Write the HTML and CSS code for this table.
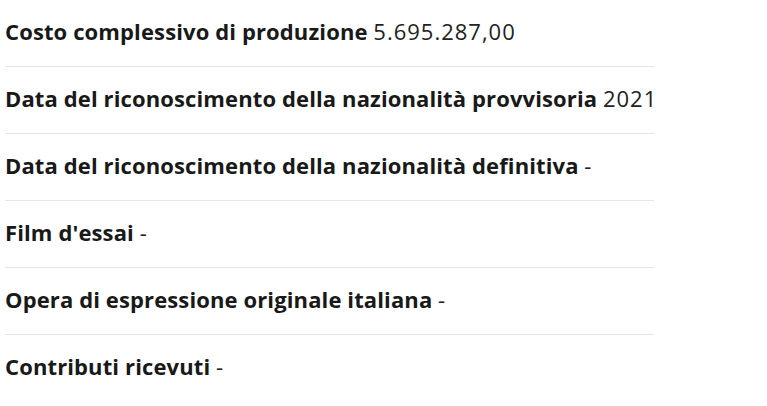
FILE: index.html
```html
<!DOCTYPE html>
<html lang="it">
<head>
    <meta charset="UTF-8">
    <title>Dettagli opera</title>
    <link rel="stylesheet" href="styles.css">
</head>
<body>
    <ul class="info-list">
        <li><strong>Costo complessivo di produzione</strong> <span class="val">5.695.287,00</span></li>
        <li><strong>Data del riconoscimento della nazionalità provvisoria</strong> <span class="val">2021</span></li>
        <li><strong>Data del riconoscimento della nazionalità definitiva</strong> <span class="val">-</span></li>
        <li><strong>Film d'essai</strong> <span class="val">-</span></li>
        <li><strong>Opera di espressione originale italiana</strong> <span class="val">-</span></li>
        <li><strong>Contributi ricevuti</strong> <span class="val">-</span></li>
    </ul>
</body>
</html>
```

FILE: styles.css
```css
*{
    margin: 0;
    padding: 0;
}
body{
    background: #fff;
    font-family: "Open Sans", sans-serif;
    color: #1c1c1c;
}
.info-list{
    list-style-type: none;
    width: 649px;
    margin-left: 5px;
}
.info-list>li{
    height: 62px;
    line-height: 62px;
    padding-bottom: 4px;
    font-size: 22px;
    border-bottom: 1px solid #e6e6e6;
    white-space: nowrap;
}
.info-list>li:last-child{
    border-bottom: none;
}
.info-list strong{
    font-weight: 700;
    color: #191919;
    letter-spacing: 0.12px;
}
.info-list .val{
    color: #222;
    letter-spacing: 1px;
}
```
